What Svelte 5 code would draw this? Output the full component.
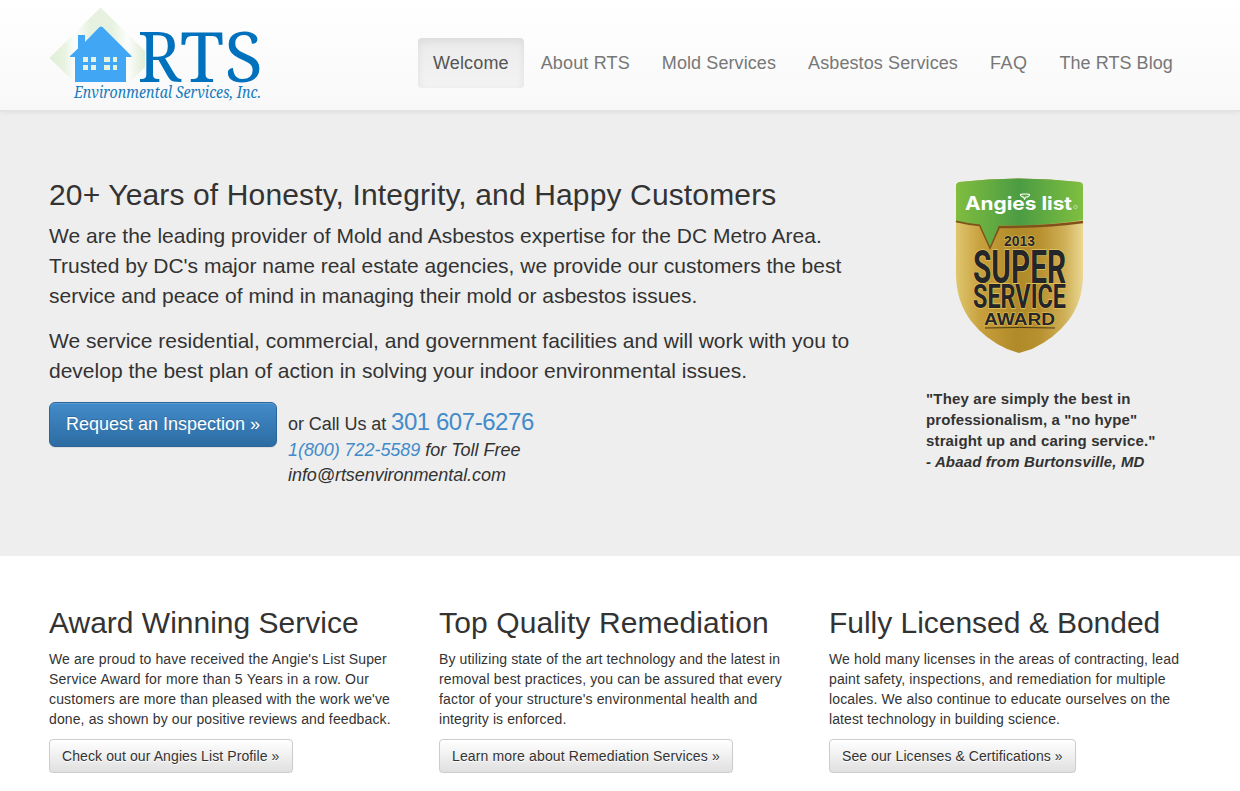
<script>
  const nav = [
    { label: 'Welcome', spacing: 0.14, active: true },
    { label: 'About RTS', spacing: 0.16 },
    { label: 'Mold Services', spacing: 0.09 },
    { label: 'Asbestos Services', spacing: 0.11 },
    { label: 'FAQ', spacing: 0.5 },
    { label: 'The RTS Blog', spacing: 0.05 }
  ];

  const intro = [
    [
      ['We are the leading provider of Mold and Asbestos expertise for the DC Metro Area.', 0.02],
      ["Trusted by DC's major name real estate agencies, we provide our customers the best", 0],
      ['service and peace of mind in managing their mold or asbestos issues.', -0.01]
    ],
    [
      ['We service residential, commercial, and government facilities and will work with you to', 0],
      ['develop the best plan of action in solving your indoor environmental issues.', 0]
    ]
  ];

  const quote = [
    ['"They are simply the best in', 0.18],
    ['professionalism, a "no hype"', 0.13],
    ['straight up and caring service."', 0.15]
  ];

  const features = [
    {
      title: 'Award Winning Service',
      titleSpacing: 0,
      lines: [
        ["We are proud to have received the Angie's List Super", 0.15],
        ['Service Award for more than 5 Years in a row. Our', 0.2],
        ["customers are more than pleased with the work we've", 0.15],
        ['done, as shown by our positive reviews and feedback.', 0.12]
      ],
      action: 'Check out our Angies List Profile »',
      actionSpacing: 0.1
    },
    {
      title: 'Top Quality Remediation',
      titleSpacing: 0.13,
      lines: [
        ['By utilizing state of the art technology and the latest in', 0.11],
        ['removal best practices, you can be assured that every', 0.14],
        ["factor of your structure's environmental health and", 0.15],
        ['integrity is enforced.', 0.1]
      ],
      action: 'Learn more about Remediation Services »',
      actionSpacing: 0.145
    },
    {
      title: 'Fully Licensed & Bonded',
      titleSpacing: -0.03,
      lines: [
        ['We hold many licenses in the areas of contracting, lead', 0.13],
        ['paint safety, inspections, and remediation for multiple', 0.14],
        ['locales. We also continue to educate ourselves on the', 0.13],
        ['latest technology in building science.', 0.1]
      ],
      action: 'See our Licenses & Certifications »',
      actionSpacing: 0.08
    }
  ];
</script>

{#snippet textLines(lines)}
  {#each lines as [text, spacing]}
    <span class="line" style:letter-spacing="{spacing}px">{text}</span>
  {/each}
{/snippet}

<header>
  <svg class="logo" width="220" height="110" viewBox="46 0 220 110" aria-label="RTS Environmental Services, Inc.">
    <defs>
      <linearGradient id="glow" x1="49" x2="151" y1="0" y2="0" gradientUnits="userSpaceOnUse">
        <stop offset="0" stop-color="#e0efd6" />
        <stop offset=".15" stop-color="#e8f2e0" />
        <stop offset=".25" stop-color="#fcfdfb" />
        <stop offset=".4" stop-color="#e6f2df" />
        <stop offset=".62" stop-color="#e6f2df" />
        <stop offset=".77" stop-color="#fcfdfb" />
        <stop offset=".92" stop-color="#e3efda" />
        <stop offset="1" stop-color="#dcecd1" />
      </linearGradient>
    </defs>
    <path d="M49.500 58 100.500 7.500 145 51V67L130 82H74Z" fill="url(#glow)" />
    <path d="M70 56 78 48.500V35h7v7l14-14.500q2-2 4 0L131.500 56v1H126v25H75V57h-5Z" fill="#41a7f5" />
    <path d="M83 57h5v5h-5zm8 0h5v5h-5zm13 0h6v5h-6zm9 0h4v5h-4zM83 65h5v5h-5zm8 0h5v5h-5zm13 0h6v5h-6zm9 0h4v5h-4z" fill="#e6f2df" />
    <g class="rts">
      <text x="137.500" y="82" textLength="43.500" lengthAdjust="spacingAndGlyphs">R</text>
      <text x="180" y="82" textLength="44" lengthAdjust="spacingAndGlyphs">T</text>
      <text x="224.500" y="82" textLength="38.500" lengthAdjust="spacingAndGlyphs">S</text>
    </g>
    <text x="74" y="97.700" class="tag" textLength="187" lengthAdjust="spacingAndGlyphs">Environmental Services, Inc.</text>
  </svg>
  <nav>
    {#each nav as item}
      <a href="#top" class:active={item.active} style:letter-spacing="{item.spacing}px">{item.label}</a>
    {/each}
  </nav>
</header>

<section class="hero">
  <div class="pitch">
    <h2>20+ Years of Honesty, Integrity, and Happy Customers</h2>
    {#each intro as lines}
      <p>{@render textLines(lines)}</p>
    {/each}
    <div class="contact">
      <a class="primary" href="#top">Request an Inspection »</a>
      <div class="call">
        <div class="first">or Call Us at <a class="phone" href="#top">301 607-6276</a></div>
        <div><em><a class="tollfree" href="#top">1(800) 722-5589</a> for Toll Free</em></div>
        <div><em class="mail">info@rtsenvironmental.com</em></div>
      </div>
    </div>
  </div>
  <aside>
    <svg class="badge" width="130" height="178" viewBox="955 177 130 178" aria-label="Angie's List 2013 Super Service Award">
      <defs>
        <linearGradient id="gold" x1="956" x2="1083" y1="0" y2="0" gradientUnits="userSpaceOnUse">
          <stop offset="0" stop-color="#dfc66e" />
          <stop offset=".2" stop-color="#c79f3c" />
          <stop offset=".48" stop-color="#b08a28" />
          <stop offset=".66" stop-color="#b8902f" />
          <stop offset=".86" stop-color="#cfb158" />
          <stop offset="1" stop-color="#ead792" />
        </linearGradient>
        <linearGradient id="green" x1="956" x2="1083" y1="0" y2="0" gradientUnits="userSpaceOnUse">
          <stop offset="0" stop-color="#80bd3f" />
          <stop offset=".5" stop-color="#4c9c43" />
          <stop offset="1" stop-color="#7fbf40" />
        </linearGradient>
      </defs>
      <path d="M956 186q0-3 3-4 60-7 121 0 3 1 3 4V274q0 28-15 47-13 17-36 28l-13 4-12-4q-22-10-36-28-15-20-15-47Z" fill="url(#gold)" />
      <path d="M956 221q12 3 24 4l10 22 9-20q50 0 84-5" fill="none" stroke="#81511c" stroke-width="2.500" />
      <path d="M956 186q0-3 3-4 60-7 121 0 3 1 3 4v34q-38 6-84 5.500l-9 21-10-22q-12-1-24-4Z" fill="url(#green)" />
      <text x="965" y="209.500" class="angie" textLength="107" lengthAdjust="spacingAndGlyphs">Angies list</text>
      <path d="M1022.500 197q-5-3 1-3h3q6 0 1 3h-1.500l-1.500 2-1-2Z" fill="#5aa644" stroke="#fff" stroke-width="1.200" />
      <circle cx="1075.500" cy="207" r="1.700" fill="none" stroke="#d5ebc4" stroke-width=".7" />
      <g class="medal">
        <text x="1004" y="246" font-size="14" textLength="31" lengthAdjust="spacingAndGlyphs">2013</text>
        <g transform="translate(973 282.500) scale(1 1.420)"><text class="super" font-size="32" textLength="93" lengthAdjust="spacingAndGlyphs">SUPER</text></g>
        <g transform="translate(973 307.500) scale(1 1.250)"><text class="super" font-size="26" textLength="93" lengthAdjust="spacingAndGlyphs">SERVICE</text></g>
        <text x="984" y="325" font-size="16.500" textLength="71" lengthAdjust="spacingAndGlyphs">AWARD</text>
      </g>
      <path d="M985 328q34-1 70 0" stroke="#4d3b16" fill="none" />
    </svg>
    <blockquote>
      {@render textLines(quote)}
      <em class="line">- Abaad from Burtonsville, MD</em>
    </blockquote>
  </aside>
</section>

<main>
  {#each features as feature}
    <article>
      <h2 style:letter-spacing="{feature.titleSpacing}px">{feature.title}</h2>
      <p>{@render textLines(feature.lines)}</p>
      <a class="secondary" href="#top" style:letter-spacing="{feature.actionSpacing}px">{feature.action}</a>
    </article>
  {/each}
</main>

<style>
  :global(body) {
    margin: 0;
    background: #fff;
    color: #333;
    font: 14px/20px "Liberation Sans", Arial, sans-serif;
    overflow: hidden;
  }
  header, section, main { box-sizing: border-box; }
  a { color: #428bca; text-decoration: none; }
  h2 { margin: 0; font-size: 30px; line-height: 33px; font-weight: 400; white-space: nowrap; }
  p { margin: 0; }
  .line { display: block; white-space: nowrap; }

  header {
    position: relative;
    display: flex;
    height: 111px;
    padding-left: 46px;
    border-bottom: 1px solid #e2e2e2;
    background: linear-gradient(#fff, #f8f8f8);
    box-shadow: 0 1px 5px rgba(0, 0, 0, .075);
  }
  .logo { flex: none; }
  .rts { font: 70px "Noto Serif", "Liberation Serif", serif; fill: #0071bd; }
  .tag { font: italic 16px "Noto Serif", "Liberation Serif", serif; fill: #1579bd; }
  nav { display: flex; gap: 2px; height: 50px; margin: 38px 0 0 152px; }
  nav a {
    padding: 0 15px;
    border-radius: 4px;
    color: #777;
    font-size: 18px;
    line-height: 50px;
    white-space: nowrap;
  }
  nav a.active {
    color: #555;
    background: linear-gradient(#ebebeb, #f3f3f3);
    box-shadow: inset 0 3px 9px rgba(0, 0, 0, .075);
  }

  .hero {
    display: grid;
    grid-template-columns: 877px 1fr;
    height: 445px;
    padding: 67px 0 0 49px;
    background: #eee;
  }
  .pitch h2 { margin-bottom: 10px; letter-spacing: .14px; }
  .pitch p { margin-bottom: 15px; font-size: 21px; line-height: 30px; }
  .contact { display: flex; gap: 11px; padding-top: 1px; font-size: 18px; }
  .primary {
    box-sizing: border-box;
    width: 228px;
    height: 45px;
    border: 1px solid #2b669a;
    border-radius: 6px;
    background: linear-gradient(#428bca, #2d6ca2);
    box-shadow: inset 0 1px 0 rgba(255, 255, 255, .15), 0 1px 1px rgba(0, 0, 0, .075);
    color: #fff;
    line-height: 43px;
    text-align: center;
    text-shadow: 0 -1px 0 rgba(0, 0, 0, .2);
    white-space: nowrap;
  }
  .call { padding-top: 6px; line-height: 25px; white-space: nowrap; }
  .first { height: 30px; line-height: 28px; letter-spacing: -.07px; }
  .phone { font-size: 24px; letter-spacing: -.45px; }
  .tollfree { letter-spacing: -.06px; }
  .mail { letter-spacing: -.06px; }

  .badge { display: block; margin: -1px 0 0 29px; }
  .angie { font: 700 18.500px Inter, sans-serif; fill: #fff; }
  .medal { font-family: "Liberation Sans", sans-serif; font-weight: bold; fill: #25262a; stroke: #e5c45e; stroke-width: 1px; paint-order: stroke; }
  .super { font-family: Roboto, sans-serif; }
  blockquote { margin: 33px 0 0; font-size: 15px; font-weight: 700; line-height: 21px; }
  blockquote em { letter-spacing: .14px; }

  main { display: grid; grid-template-columns: 390px 390px 1fr; padding: 50px 0 0 49px; }
  article p { margin: 10px 0; }
  .secondary {
    display: inline-block;
    padding: 0 12px;
    border: 1px solid #ccc;
    border-radius: 4px;
    background: linear-gradient(#fff, #e0e0e0);
    box-shadow: inset 0 1px 0 rgba(255, 255, 255, .15), 0 1px 1px rgba(0, 0, 0, .075);
    color: #333;
    line-height: 32px;
    text-shadow: 0 1px 0 #fff;
    white-space: nowrap;
  }
</style>
